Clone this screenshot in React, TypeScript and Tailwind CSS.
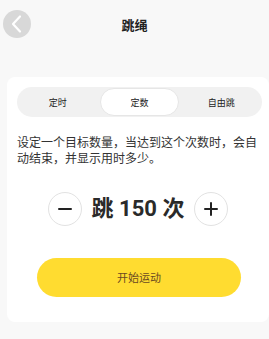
import { useState } from "react";

const tabs = ["定时", "定数", "自由跳"];

function App() {
  const [active, setActive] = useState(1);
  const [count, setCount] = useState(150);

  return (
    <div className="w-[269px] h-[339px] bg-[#f8f8f8] overflow-hidden font-['Noto_Sans_CJK_SC','Noto_Sans',sans-serif] text-[#222]">
      {/* header */}
      <div className="relative h-[48px] flex items-center justify-center">
        <button className="absolute left-[3px] top-[10px] w-[28px] h-[28px] rounded-full bg-[#d8d8d8] flex items-center justify-center">
          <svg width="14" height="20" viewBox="0 0 14 20" fill="none">
            <path d="M10 2.5 L3 10 L10 17.5" stroke="#fff" strokeWidth="2.2" strokeLinecap="round" strokeLinejoin="round" />
          </svg>
        </button>
        <h1 className="text-[13px] font-bold leading-none">跳绳</h1>
      </div>

      {/* card */}
      <div className="mt-[29px] ml-[7px] h-[245px] bg-white rounded-[8px] pl-[10px] pr-[7px] pt-[10px]">
        <div className="h-[30px] rounded-full bg-[#f1f1f1] grid grid-cols-3 items-center">
          {tabs.map((t, i) => (
            <button
              key={t}
              onClick={() => setActive(i)}
              className={
                i === active
                  ? "h-[28px] mx-[1px] rounded-full bg-white border border-[#e6e6e6] text-[9px] leading-none"
                  : "h-[28px] text-[9px] leading-none"
              }
            >
              {t}
            </button>
          ))}
        </div>

        <p className="mt-[17px] text-[12px] leading-[16px] text-[#333] pr-[3px]">
          设定一个目标数量，当达到这个次数时，会自动结束，并显示用时多少。
        </p>

        <div className="mt-[26px] flex items-center justify-center gap-[10px] pr-[3px]">
          <button
            onClick={() => setCount(Math.max(0, count - 10))}
            className="w-[34px] h-[34px] rounded-full border border-[#e2e2e2] flex items-center justify-center"
          >
            <svg width="14" height="14" viewBox="0 0 14 14">
              <path d="M1 7 H13" stroke="#222" strokeWidth="2" strokeLinecap="round" />
            </svg>
          </button>
          <span className="font-['Roboto','Noto_Sans_CJK_SC',sans-serif] text-[22px] font-bold leading-none text-[#2a2a2a] whitespace-nowrap">
            跳 {count} 次
          </span>
          <button
            onClick={() => setCount(count + 10)}
            className="w-[34px] h-[34px] rounded-full border border-[#e2e2e2] flex items-center justify-center"
          >
            <svg width="14" height="14" viewBox="0 0 14 14">
              <path d="M1 7 H13 M7 1 V13" stroke="#222" strokeWidth="2" strokeLinecap="round" />
            </svg>
          </button>
        </div>

        <div className="mt-[32px] pl-[20px] pr-[21px]">
          <button className="w-full h-[39px] rounded-full bg-[#ffdc30] text-[11px] text-[#6b4a22]">
            开始运动
          </button>
        </div>
      </div>
    </div>
  );
}

export default App;
